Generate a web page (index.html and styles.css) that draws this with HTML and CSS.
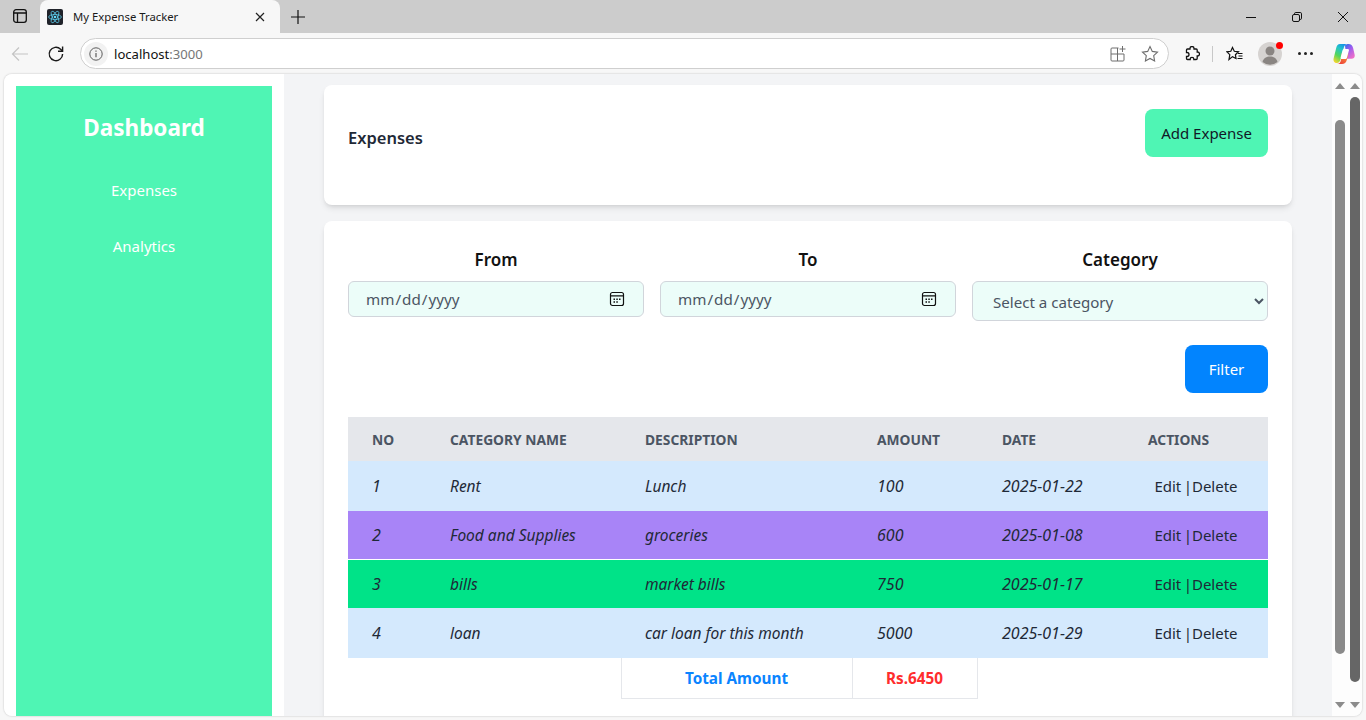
FILE: index.html
```html
<!DOCTYPE html>
<html lang="en">
<head>
<meta charset="utf-8">
<title>My Expense Tracker</title>
<link rel="stylesheet" href="styles.css">
</head>
<body>
<div class="tabstrip">
  <button class="strip-btn sidebar-toggle" aria-label="Tabs">
    <svg width="16" height="16" viewBox="0 0 16 16" fill="none" stroke="#111" stroke-width="1.300"><rect x="1.700" y="1.700" width="12.600" height="12.600" rx="2.400"/><path d="M1.700 5h12.600M5.500 5v9.300"/></svg>
  </button>
  <div class="tab">
    <svg class="favicon" width="16" height="16" viewBox="0 0 16 16" fill="none"><rect width="16" height="16" rx="2" fill="#20232a"/><g stroke="#61dafb" stroke-width=".7"><ellipse cx="8" cy="8" rx="6.400" ry="2.500"/><ellipse cx="8" cy="8" rx="6.400" ry="2.500" transform="rotate(60 8 8)"/><ellipse cx="8" cy="8" rx="6.400" ry="2.500" transform="rotate(120 8 8)"/></g><circle cx="8" cy="8" r="1.300" fill="#61dafb"/></svg>
    <span class="tab-title">My Expense Tracker</span>
    <svg class="tab-close" width="10" height="10" viewBox="0 0 10 10" stroke="#222" stroke-width="1.200"><path d="M1 1l8 8M9 1l-8 8"/></svg>
  </div>
  <button class="strip-btn new-tab" aria-label="New tab">
    <svg width="14" height="14" viewBox="0 0 14 14" stroke="#111" stroke-width="1.200"><path d="M7 0v14M0 7h14"/></svg>
  </button>
  <div class="window-controls">
    <svg width="10" height="10" viewBox="0 0 10 10" stroke="#111" stroke-width="1"><path d="M0 5.500h10"/></svg>
    <svg width="10" height="10" viewBox="0 0 10 10" fill="none" stroke="#111" stroke-width="1"><rect x=".5" y="2.500" width="7" height="7" rx="1.500"/><path d="M2.500 2.200V1.800A1.300 1.300 0 0 1 3.800.5h4.400a1.300 1.300 0 0 1 1.300 1.300v4.400a1.300 1.300 0 0 1-1.300 1.300H8"/></svg>
    <svg width="10" height="10" viewBox="0 0 10 10" stroke="#111" stroke-width="1"><path d="M0 0l10 10M10 0L0 10"/></svg>
  </div>
</div>

<div class="toolbar">
  <svg class="nav-icon" width="18" height="16" viewBox="0 0 18 16" fill="none" stroke="#c4c4c4" stroke-width="1.200"><path d="M17 8H1.500M8 1.500L1.500 8 8 14.500"/></svg>
  <svg class="nav-icon" width="18" height="18" viewBox="0 0 18 18" fill="none" stroke="#1a1a1a" stroke-width="1.400"><path d="M15.600 9A6.700 6.700 0 1 1 13.600 4.200L15.500 6"/><path d="M15.600 1.500V6.200H11"/></svg>
  <div class="addressbar">
    <span class="site-info">
      <svg width="14" height="14" viewBox="0 0 14 14" fill="none" stroke="#5c5c5c"><circle cx="7" cy="7" r="6.200"/><path d="M7 6v4.200M7 3.600v1.200" stroke-width="1.200"/></svg>
    </span>
    <span class="url">localhost<span class="url-port">:3000</span></span>
    <svg class="addr-icon" width="16" height="16" viewBox="0 0 16 16" fill="none" stroke="#6e6e6e"><path d="M8.500 2H2a1 1 0 0 0-1 1v11a1 1 0 0 0 1 1h11a1 1 0 0 0 1-1V8H1M7.500 2v13M12.500 0v6M9.500 3h6"/></svg>
    <svg class="addr-icon" width="18" height="18" viewBox="0 0 18 18" fill="none" stroke="#6e6e6e" stroke-width="1.100"><path d="M9 1.600l2.300 4.800 5.200.7-3.800 3.600.9 5.200L9 13.400l-4.600 2.500.9-5.200L1.500 7.100l5.200-.7z"/></svg>
  </div>
  <svg class="tool-icon puzzle" width="16" height="16" viewBox="0 0 16 16" fill="none" stroke="#111" stroke-width="1.300"><path d="M6 2.500a2 2 0 0 1 4 0V3h2.200a1 1 0 0 1 1 1v2h.3a2 2 0 0 1 0 4h-.3v2.500a1 1 0 0 1-1 1h-2.400v-.4a1.800 1.800 0 0 0-3.600 0v.4H3.500a1 1 0 0 1-1-1V10.500H3a2 2 0 0 0 0-4h-.5V4a1 1 0 0 1 1-1H6z"/></svg>
  <span class="tool-sep"></span>
  <svg class="tool-icon favs" width="18" height="16" viewBox="0 0 18 16" fill="none" stroke="#111" stroke-width="1.200"><path d="M6.500 1.500L8.300 5.300 12.500 5.800 9.400 8.700 10 12.500 6.500 10.600 3 13.500 3.800 8.700 1 5.800 4.800 5.300z"/><path d="M12 7.500h4.500M12.500 10h4M11.500 12.500h5"/></svg>
  <span class="avatar">
    <svg width="24" height="24" viewBox="0 0 24 24"><circle cx="12" cy="12" r="12" fill="#d6d3d1"/><circle cx="12" cy="9" r="4.500" fill="#8a8582"/><path d="M4.500 20c1-4 4-5.500 7.500-5.500s6.500 1.500 7.500 5.500a12 12 0 0 1-15 0z" fill="#8a8582"/></svg>
    <span class="avatar-dot"></span>
  </span>
  <span class="more"><i></i><i></i><i></i></span>
  <svg class="copilot" width="22" height="22" viewBox="0 0 22 22" fill="none">
    <defs>
      <linearGradient id="cpA" x1="0.700" y1="0" x2="0.200" y2="1"><stop offset="0" stop-color="#1590e8"/><stop offset=".3" stop-color="#22c4c8"/><stop offset=".65" stop-color="#55d65a"/><stop offset="1" stop-color="#f5d62e"/></linearGradient>
      <linearGradient id="cpB" x1="0.100" y1="0" x2="0.700" y2="1"><stop offset="0" stop-color="#2f6fe8"/><stop offset=".4" stop-color="#9a5cf0"/><stop offset="1" stop-color="#f06fc8"/></linearGradient>
      <linearGradient id="cpC" x1="0.800" y1="0" x2="0.200" y2="1"><stop offset="0" stop-color="#f8a03a"/><stop offset="1" stop-color="#ee3e38"/></linearGradient>
    </defs>
    <path d="M7 1h8c-2.500 0-3.600 1.500-4.300 4L7.800 15.500C7 18.500 5.800 20 3.800 20 1.500 20 0 18 .6 15.500L3.200 5C3.800 2.500 5 1 7 1z" fill="url(#cpA)"/>
    <path d="M12 2.500C12.800 1.500 14 1 15.500 1c2.500 0 3.900 1.300 4.600 4l1.500 6.500c.6 2.500-.7 4.200-3 4.200H13.500z" fill="url(#cpB)"/>
    <path d="M8.500 10.500h7L13.800 17c-.7 2.700-2.300 4-4.800 4H4c2.500 0 3.400-1.500 4-4z" fill="url(#cpC)"/>
    <path d="M11.400 6h3.300c.9 0 1.400.6 1.200 1.500l-1.900 7c-.3 1-.9 1.500-1.800 1.500H8.800c-.9 0-1.400-.6-1.200-1.500l1.900-7C9.800 6.500 10.400 6 11.400 6z" fill="#fff"/>
  </svg>
</div>

<div class="viewport">
  <aside class="side-wrap">
    <nav class="sidebar">
      <h1 class="brand">Dashboard</h1>
      <a class="nav-link">Expenses</a>
      <a class="nav-link">Analytics</a>
    </nav>
  </aside>

  <main class="main">
    <section class="card head-card">
      <h2 class="page-title">Expenses</h2>
      <button class="btn btn-add">Add Expense</button>
    </section>

    <section class="card list-card">
      <div class="filters">
        <div class="field">
          <label class="field-label">From</label>
          <input class="control" type="date">
        </div>
        <div class="field">
          <label class="field-label">To</label>
          <input class="control" type="date">
        </div>
        <div class="field">
          <label class="field-label">Category</label>
          <select class="control control-select"><option>Select a category</option></select>
        </div>
      </div>
      <div class="filter-actions"><button class="btn btn-filter">Filter</button></div>

      <table class="expenses">
        <colgroup>
          <col class="c-no"><col class="c-cat"><col class="c-desc"><col class="c-amt"><col class="c-date"><col class="c-act">
        </colgroup>
        <thead>
          <tr><th>No</th><th>Category Name</th><th>Description</th><th class="shift">Amount</th><th class="shift">Date</th><th>Actions</th></tr>
        </thead>
        <tbody>
          <tr class="r-blue r-first"><td class="num">1</td><td>Rent</td><td>Lunch</td><td class="num shift">100</td><td class="num shift">2025-01-22</td><td class="act">Edit |Delete</td></tr>
          <tr class="r-purple"><td class="num">2</td><td>Food and Supplies</td><td>groceries</td><td class="num shift">600</td><td class="num shift">2025-01-08</td><td class="act">Edit |Delete</td></tr>
          <tr class="r-green"><td class="num">3</td><td>bills</td><td>market bills</td><td class="num shift">750</td><td class="num shift">2025-01-17</td><td class="act">Edit |Delete</td></tr>
          <tr class="r-blue r-last"><td class="num">4</td><td>loan</td><td>car loan for this month</td><td class="num shift">5000</td><td class="num shift">2025-01-29</td><td class="act">Edit |Delete</td></tr>
        </tbody>
        <tfoot>
          <tr><td class="blank" colspan="2"></td><td class="total-label">Total Amount</td><td class="total-value">Rs.6450</td><td class="blank" colspan="2"></td></tr>
        </tfoot>
      </table>
    </section>
  </main>

  <div class="scrollbars">
    <div class="scroll-col col-a"><span class="arrow up"></span><span class="thumb thumb-a"></span><span class="arrow down"></span></div>
    <div class="scroll-col col-b"><span class="arrow up"></span><span class="thumb thumb-b"></span><span class="arrow down"></span></div>
  </div>
</div>
</body>
</html>
```

FILE: styles.css
```css
* { box-sizing: border-box; }
html, body { margin: 0; height: 720px; overflow: hidden; }
body { background: #f7f7f7; font-family: "Noto Sans", "Open Sans", sans-serif; color: #1f2937; }
button { font-family: inherit; border: 0; }

/* browser chrome */
.tabstrip { height: 33px; background: #cccccc; display: flex; align-items: flex-end; position: relative; }
.strip-btn { background: none; padding: 0; display: flex; align-items: center; justify-content: center; }
.sidebar-toggle { width: 16px; height: 16px; margin: 0 0 9px 12px; }
.tab { width: 240px; height: 33px; margin-left: 12px; background: #f7f7f7; border-radius: 8px 8px 0 0; display: flex; align-items: center; padding: 0 15px 0 7px; }
.favicon { flex: none; }
.tab-title { margin-left: 10px; font-size: 11.300px; color: #1a1a1a; flex: 1; white-space: nowrap; }
.new-tab { width: 14px; height: 14px; margin: 0 0 9px 11px; }
.window-controls { margin-left: auto; display: flex; gap: 36px; padding: 0 18px 11px 0; align-items: center; }
.toolbar { height: 41px; display: flex; align-items: center; padding: 0 0 0 11px; position: relative; }
.nav-icon { flex: none; }
.nav-icon + .nav-icon { margin-left: 18px; }
.addressbar { margin-left: 15px; width: 1089px; height: 31px; background: #fff; border: 1px solid #cfcfcf; border-radius: 16px; display: flex; align-items: center; padding: 0 9px 0 3px; }
.site-info { width: 24px; height: 24px; border-radius: 50%; background: #f2f2f2; display: flex; align-items: center; justify-content: center; flex: none; }
.url { margin-left: 6px; font-size: 13.100px; color: #111; flex: 1; }
.url-port { color: #767676; }
.addr-icon { flex: none; }
.addr-icon + .addr-icon { margin-left: 15px; }
.tool-icon { flex: none; }
.puzzle { margin-left: 15px; }
.tool-sep { width: 1px; height: 16px; background: #c8c8c8; margin: 0 12px; flex: none; }
.favs { margin-left: 1px; }
.avatar { position: relative; width: 24px; height: 24px; margin-left: 14px; flex: none; }
.avatar svg { display: block; }
.avatar-dot { position: absolute; top: 0; right: -1px; width: 7px; height: 7px; border-radius: 50%; background: #f00; }
.more { display: flex; gap: 3px; margin-left: 16px; flex: none; }
.more i { width: 3px; height: 3px; border-radius: 50%; background: #222; }
.copilot { margin-left: 20px; flex: none; }

/* page */
.viewport { height: 642px; margin: 0 4px; display: flex; background: #f3f4f6; border-radius: 8px; overflow: hidden; box-shadow: 0 0 2px rgba(0,0,0,.25); }
.side-wrap { width: 280px; flex: none; background: #fff; padding: 12px 12px 0; }
.sidebar { height: 100%; background: #4ff5b4; display: flex; flex-direction: column; align-items: center; color: #fff; padding-top: 26px; }
.brand { margin: 0 0 35px; font-size: 22.500px; line-height: 31px; font-weight: 700; }
.nav-link { font-size: 15px; line-height: 24px; margin-bottom: 32px; }

.main { flex: 1; min-width: 0; padding: 11px 40px 0; display: flex; flex-direction: column; gap: 16px; }
.card { background: #fff; border-radius: 8px; box-shadow: 0 4px 6px -1px rgba(0,0,0,.1), 0 2px 4px -2px rgba(0,0,0,.1); padding: 24px; flex: none; }
.head-card { height: 120px; display: flex; justify-content: space-between; align-items: flex-start; }
.page-title { margin: 15px 0 0; font-size: 16.500px; line-height: 28px; font-weight: 600; color: #1f2937; }
.btn { border-radius: 8px; font-size: 15px; line-height: 24px; height: 48px; padding: 0 16px; }
.btn-add { background: #4ff5b4; color: #111827; }
.list-card { height: 520px; padding-top: 27px; }
.filters { display: grid; grid-template-columns: repeat(3, 1fr); gap: 16px; align-items: start; }
.field { display: flex; flex-direction: column; align-items: stretch; }
.field-label { font-size: 17px; line-height: 24px; font-weight: 600; color: #111; text-align: center; margin-bottom: 9px; }
.control { height: 36px; width: 100%; background: #ecfdf9; border: 1px solid #d1d5db; border-radius: 6px; padding: 0 16px; font-family: inherit; font-size: 15.200px; color: #4b5563; }
.control::-webkit-calendar-picker-indicator { width: 16px; height: 16px; padding: 0; margin: 0 2px 0 0; background: url("data:image/svg+xml,%3Csvg xmlns='http://www.w3.org/2000/svg' viewBox='0 0 16 16' fill='none'%3E%3Crect x='1.500' y='1.500' width='13' height='13' rx='2' stroke='%23111' stroke-width='1.200'/%3E%3Cpath d='M1.500 4.800h13' stroke='%23111' stroke-width='1.200'/%3E%3Cpath d='M4.500 7.500h1.500v1.500H4.500zM7.300 7.500h1.500v1.500H7.300zM10 7.500h1.500v1.500H10zM4.500 10.300h1.500v1.500H4.500zM7.300 10.300h1.500v1.500H7.300z' fill='%23111'/%3E%3C/svg%3E") center / 16px 16px no-repeat; }
.control-select { height: 40px; padding: 2px 0 0 16px; font-size: 15.100px; }
.filter-actions { display: flex; justify-content: flex-end; margin-top: 24px; }
.btn-filter { background: #0284fe; color: #fff; width: 83px; padding: 0; }

.expenses { width: 920px; margin-top: 24px; border-collapse: collapse; table-layout: fixed; font-size: 15.500px; }
.c-no { width: 78px; } .c-cat { width: 195px; } .c-desc { width: 231px; } .c-amt { width: 125px; } .c-date { width: 147px; } .c-act { width: 144px; }
.expenses th { height: 44px; background: #e5e7eb; color: #4b5563; font-size: 13.800px; font-weight: 700; text-transform: uppercase; text-align: left; padding: 1px 0 0 24px; }
.expenses tbody td { height: 49px; padding: 0 0 0 24px; font-style: italic; color: #1f2937; white-space: nowrap; }
.expenses tbody td.num { font-size: 16px; }
.expenses th.shift, .expenses tbody td.shift { padding-left: 25px; }
.expenses tbody td.act { font-style: normal; text-align: center; padding: 0; font-size: 15px; word-spacing: -1.500px; }
.r-blue { background: #d4e9fd; }
.r-purple { background: #a884f7; border-bottom: 1px solid #fff; }
.r-green { background: #00e388; }
.expenses .r-first td { height: 50px; }
.expenses .r-purple td { height: 48px; }
.expenses .r-green td { height: 49px; }
.expenses .r-last td { height: 50px; }
.expenses tfoot td { height: 40px; text-align: center; font-weight: 700; font-size: 15.300px; }
.total-label { color: #0a84ff; border: 1px solid #e5e7eb; border-top: 0; }
.total-value { color: #ff2d2d; border: 1px solid #e5e7eb; border-top: 0; }
.expenses tfoot td.blank { border: 0; }

/* scrollbars */
.scrollbars { width: 30px; flex: none; background: #fdfdfd; display: flex; padding-left: 3px; gap: 5px; }
.scroll-col { width: 10px; height: 100%; display: flex; flex-direction: column; align-items: center; position: relative; }
.arrow { position: absolute; width: 0; height: 0; border-left: 5px solid transparent; border-right: 5px solid transparent; }
.arrow.up { top: 9px; border-bottom: 6px solid #8c8c8c; }
.arrow.down { bottom: 8px; border-top: 6px solid #8c8c8c; }
.thumb { position: absolute; left: 0; width: 10px; border-radius: 5px; }
.thumb-a { top: 46px; height: 534px; background: #8a8a8a; }
.thumb-b { top: 23px; height: 585px; background: #666; }
```
